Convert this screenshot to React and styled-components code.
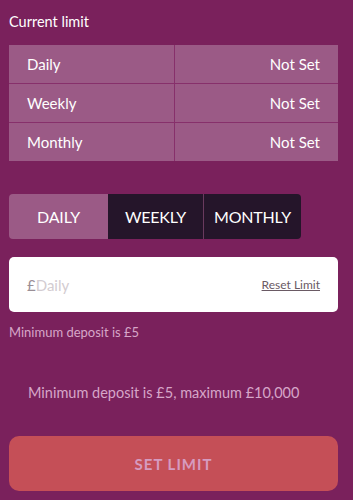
import React, { useState } from 'react';
import styled, { createGlobalStyle } from 'styled-components';

const GlobalStyle = createGlobalStyle`
  html, body {
    margin: 0;
    padding: 0;
    background: #7a215c;
  }
  body {
    font-family: Lato, "Noto Sans", sans-serif;
  }
`;

const Page = styled.div`
  width: 329px;
  padding: 13px 15px 9px 9px;
  display: flex;
  flex-direction: column;
  color: #fff;
`;

const Title = styled.div`
  font-size: 14.5px;
  line-height: 18px;
  margin-bottom: 14px;
`;

const LimitTable = styled.div`
  display: grid;
  grid-template-columns: 165px 1fr;
  gap: 1px;
  background: #87306b;
`;

const Cell = styled.div`
  background: #9b5a86;
  height: 38px;
  display: flex;
  align-items: center;
  justify-content: ${(p) => (p.$right ? 'flex-end' : 'flex-start')};
  padding: 0 18px;
  font-size: 15px;
`;

const Tabs = styled.div`
  display: flex;
  margin-top: 33px;
  width: 292px;
  height: 45px;
  border-radius: 4px;
  overflow: hidden;
`;

const Tab = styled.button`
  flex: 0 0 ${(p) => p.$w}px;
  border: none;
  border-left: ${(p) => (p.$first ? 'none' : '1px solid #6a3a5e')};
  background: ${(p) => (p.$active ? '#9b5a86' : '#25152a')};
  color: #fff;
  font-family: inherit;
  font-size: 16px;
  text-transform: uppercase;
  letter-spacing: -0.2px;
  cursor: pointer;
  padding: 0;
`;

const InputBox = styled.div`
  margin-top: 18px;
  height: 55px;
  background: #fff;
  border-radius: 5px;
  display: flex;
  align-items: center;
  padding: 0 18px;
`;

const Currency = styled.span`
  color: #9a8f96;
  font-size: 15px;
`;

const AmountInput = styled.input`
  flex: 1;
  border: none;
  outline: none;
  font-family: inherit;
  font-size: 15px;
  padding: 0;
  color: #333;
  min-width: 0;
  &::placeholder {
    color: #d3ccd1;
  }
`;

const ResetLink = styled.a`
  color: #6a5a64;
  font-size: 12px;
  text-decoration: underline;
  cursor: pointer;
`;

const Hint = styled.div`
  margin-top: 12px;
  font-size: 13px;
  color: #d6a6c8;
`;

const RangeNote = styled.div`
  margin-top: 44px;
  padding-left: 19px;
  font-size: 14.5px;
  color: #d6a6c8;
`;

const SubmitButton = styled.button`
  margin-top: 35px;
  height: 55px;
  border: none;
  border-radius: 10px;
  background: #c54f57;
  color: #d69bc0;
  font-family: inherit;
  font-weight: 700;
  font-size: 15px;
  letter-spacing: 1px;
  cursor: pointer;
`;

const rows = [
  ['Daily', 'Not Set'],
  ['Weekly', 'Not Set'],
  ['Monthly', 'Not Set'],
];

const tabs = [
  { key: 'daily', label: 'Daily', w: 99 },
  { key: 'weekly', label: 'Weekly', w: 95 },
  { key: 'monthly', label: 'Monthly', w: 98 },
];

export default function App() {
  const [period, setPeriod] = useState('daily');
  const current = tabs.find((t) => t.key === period);

  return (
    <Page>
      <GlobalStyle />
      <Title>Current limit</Title>
      <LimitTable>
        {rows.map(([name, value]) => (
          <React.Fragment key={name}>
            <Cell>{name}</Cell>
            <Cell $right>{value}</Cell>
          </React.Fragment>
        ))}
      </LimitTable>

      <Tabs>
        {tabs.map((t, i) => (
          <Tab
            key={t.key}
            $w={t.w}
            $first={i < 2}
            $active={period === t.key}
            onClick={() => setPeriod(t.key)}>
            {t.label}
          </Tab>
        ))}
      </Tabs>

      <InputBox>
        <Currency>£</Currency>
        <AmountInput placeholder={current.label} />
        <ResetLink>Reset Limit</ResetLink>
      </InputBox>
      <Hint>Minimum deposit is £5</Hint>

      <RangeNote>Minimum deposit is £5, maximum £10,000</RangeNote>
      <SubmitButton>SET LIMIT</SubmitButton>
    </Page>
  );
}
